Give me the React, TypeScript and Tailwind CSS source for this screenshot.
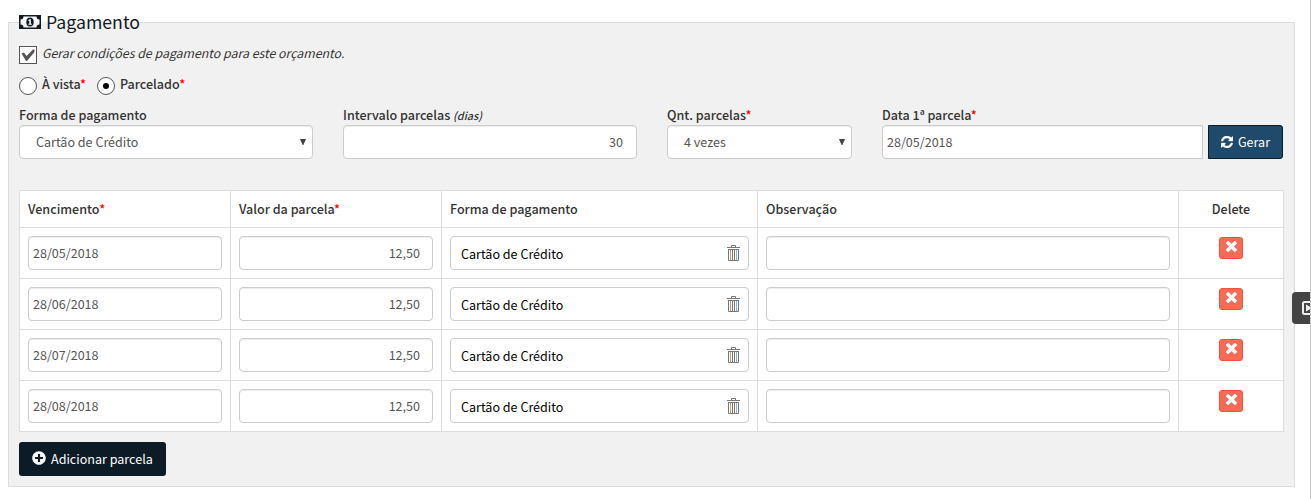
import React from "react";
import { FaPlusCircle } from "react-icons/fa";

const rows = ["28/05/2018", "28/06/2018", "28/07/2018", "28/08/2018"];

const inputBox =
  "flex h-[34px] items-center rounded border border-[#ccc] bg-white text-[#555] shadow-[inset_0_1px_1px_rgba(0,0,0,0.075)]";

function Req() {
  return <span className="text-[#f00]">*</span>;
}

function Caret() {
  return (
    <svg className="-mt-px h-[6px] w-[6px]" viewBox="0 0 6 6" fill="#444">
      <path d="M0 0h6L3.400 6h-.8z" />
    </svg>
  );
}

function Check() {
  return (
    <svg className="h-[12px] w-[14px]" viewBox="0 0 14 12" fill="#555">
      <path d="M.5 4.500L3 3.500 5.500 7 12 .5l1.500 0v2.500L6 12H5z" />
    </svg>
  );
}

function Money() {
  return (
    <svg className="-mt-[2px] h-[14px] w-[22px]" viewBox="0 0 22 14">
      <path fill="#0f1a24" fillRule="evenodd" d="M0 0h22v14H0zM4.500 1.500A3 3 0 0 1 1.500 4.500v5A3 3 0 0 1 4.500 12.500h13A3 3 0 0 1 20.500 9.500v-5A3 3 0 0 1 17.500 1.500z" />
      <ellipse cx="11" cy="7" rx="3.700" ry="4.500" fill="#0f1a24" />
      <path fill="#fff" d="M10.500 4.200h1.300v4.600h1v1H9.300v-1h1V5.700l-.8.400-.3-.9z" />
    </svg>
  );
}

function Times() {
  return (
    <svg className="-mt-[2px] h-[11px] w-[11px]" viewBox="0 0 1188 1188" fill="#fff">
      <path d="M1188 956q0 40-28 68l-136 136q-28 28-68 28t-68-28L594 866l-294 294q-28 28-68 28t-68-28L28 1024Q0 996 0 956t28-68l294-294L28 300Q0 272 0 232t28-68L164 28Q192 0 232 0t68 28l294 294L888 28q28-28 68-28t68 28l136 136q28 28 28 68t-28 68L866 594l294 294q28 28 28 68z" />
    </svg>
  );
}

function Refresh() {
  return (
    <svg className="h-[12px] w-[12px]" viewBox="0 0 1536 1536" fill="#fff" stroke="#fff" strokeWidth="50">
      <path d="M1511 928q0 5-1 7-64 268-268 434.500T764 1536q-146 0-282.500-55T238 1324l-129 129q-19 19-45 19t-45-19-19-45V960q0-26 19-45t45-19h448q26 0 45 19t19 45-19 45l-137 137q71 66 161 102t187 36q134 0 250-65t186-179q11-17 53-117 8-23 30-23h192q13 0 22.500 9.500t9.500 22.500zm25-800v448q0 26-19 45t-45 19h-448q-26 0-45-19t-19-45 19-45l138-138Q969 256 768 256q-134 0-250 65T332 500q-11 17-53 117-8 23-30 23H50q-13 0-22.500-9.500T18 608v-7q65-268 270-434.500T768 0q146 0 284 55.500T1297 212l130-129q19-19 45-19t45 19 19 45z" />
    </svg>
  );
}

function Trash() {
  return (
    <svg className="-mt-px h-[16px] w-[13px] shrink-0" viewBox="0 0 13 16" fill="none" stroke="#777">
      <path d="M4.500 2.500v-2h4v2M0 2.500h13M1.500 4v11.500h10V4M1 4.500h11" />
      <path stroke="#c99f78" d="M3.500 5v10" />
      <path d="M5.500 5v10M7.500 5v10" />
      <path stroke="#8fb4dc" d="M9.500 5v10" />
    </svg>
  );
}

function Label({ children }: { children: React.ReactNode }) {
  return <div className="h-5 whitespace-nowrap font-medium leading-5">{children}</div>;
}

export default function App() {
  return (
    <div className="relative h-[499px] w-[1311px] overflow-hidden border-r border-[#ccc] bg-white pl-2 pt-[11px] font-['Noto_Sans_CJK_SC','Noto_Sans',sans-serif] text-[12.550px] text-[#333]">
      <fieldset className="h-[476px] w-[1287px] border border-[#ddd] bg-[#f1f1f1] px-[10px]">
        <legend className="flex h-[23px] items-center gap-[5px] text-[17.700px] leading-[23px] text-[#0f1a24]">
          <Money />
          <span className="-mt-[2px] whitespace-nowrap">Pagamento</span>
        </legend>
        <div className="mt-[12px] flex h-[18px] items-center gap-[5px]">
          <span className="flex size-[18px] items-center justify-center border border-[#555] bg-white">
            <Check />
          </span>
          <span className="-mt-1 whitespace-nowrap text-[12.350px] italic">Gerar condições de pagamento para este orçamento.</span>
        </div>
        <div className="mt-[13px] flex h-[18px] items-center font-medium">
          <span className="size-[18px] rounded-full border border-[#555] bg-white" />
          <span className="-mt-[3px] ml-[5px] w-[55px] whitespace-nowrap">À vista<Req /></span>
          <span className="flex size-[18px] items-center justify-center rounded-full border border-[#555] bg-white">
            <span className="size-[6px] rounded-full bg-black" />
          </span>
          <span className="-mt-[3px] ml-[5px] whitespace-nowrap">Parcelado<Req /></span>
        </div>
        <div className="mt-[10px] flex">
          <div className="w-[294px]">
            <Label>Forma de pagamento</Label>
            <div className={`${inputBox} justify-between pl-4 pr-[6px]`}><span>Cartão de Crédito</span><Caret /></div>
          </div>
          <div className="ml-[30px] w-[294px]">
            <Label>Intervalo parcelas <span className="text-[10.800px] italic">(dias)</span></Label>
            <div className={`${inputBox} justify-end pr-[13px]`}>30</div>
          </div>
          <div className="ml-[30px] w-[185px]">
            <Label>Qnt. parcelas<Req /></Label>
            <div className={`${inputBox} justify-between pl-4 pr-[6px]`}><span>4 vezes</span><Caret /></div>
          </div>
          <div className="ml-[30px] w-[321px]">
            <Label>Data 1ª parcela<Req /></Label>
            <div className="flex h-[34px] items-center rounded-l border border-[#ccc] bg-white pl-1 text-[#555] shadow-[inset_0_1px_1px_rgba(0,0,0,0.075)]">28/05/2018</div>
          </div>
          <button className="ml-[5px] mt-5 flex h-[34px] w-[75px] items-center justify-center gap-[5px] rounded-r-[3px] border border-[#0d1b26] bg-[#1f4a6b] text-white">
            <Refresh /><span>Gerar</span>
          </button>
        </div>
        <table className="mt-[31px] w-[1265px] table-fixed border-separate border-spacing-0 border-l border-t border-[#ddd] bg-white">
          <colgroup>
            <col className="w-[211px]" /><col className="w-[211px]" /><col className="w-[316px]" /><col className="w-[421px]" /><col className="w-[105px]" />
          </colgroup>
          <thead>
            <tr className="h-[37px] text-left [&>th]:border-b [&>th]:border-r [&>th]:border-[#ddd] [&>th]:px-2 [&>th]:py-0 [&>th]:font-medium">
              <th>Vencimento<Req /></th>
              <th>Valor da parcela<Req /></th>
              <th>Forma de pagamento</th>
              <th>Observação</th>
              <th className="text-center">Delete</th>
            </tr>
          </thead>
          <tbody>
            {rows.map((d) => (
              <tr key={d} className="h-[51px] [&>td]:border-b [&>td]:border-r [&>td]:border-[#ddd] [&>td]:px-2 [&>td]:py-0">
                <td><div className={`${inputBox} pl-1`}>{d}</div></td>
                <td><div className={`${inputBox} justify-end pr-3`}>12,50</div></td>
                <td>
                  <div className="flex h-[34px] items-center justify-between rounded border border-[#ccc] bg-white pl-[10px] pr-2 text-black">
                    <span className="mt-[3px]">Cartão de Crédito</span><Trash />
                  </div>
                </td>
                <td><div className={inputBox} /></td>
                <td>
                  <button className="mx-auto -mt-[11px] flex h-[22px] w-[24px] items-center justify-center rounded-[3px] border border-[#f4523b] bg-[#f76a56]">
                    <Times />
                  </button>
                </td>
              </tr>
            ))}
          </tbody>
        </table>
        <button className="mt-[10px] flex h-[34px] w-[147px] items-center gap-[5px] rounded-[3px] bg-[#0d1b26] pl-[13px] text-white">
          <FaPlusCircle size={14} className="-mt-[2px]" /><span className="whitespace-nowrap">Adicionar parcela</span>
        </button>
      </fieldset>
      <div className="absolute left-[1292px] top-[292px] flex h-8 w-[19px] items-center rounded-l bg-[#444] pl-[10px]">
        <svg className="h-[14px] w-[16px] shrink-0" viewBox="0 0 16 14" fill="none">
          <rect x="1" y="1" width="15" height="12" rx="1.500" stroke="#eee" strokeWidth="2" />
          <path d="M4 3.500l6 3.500-6 3.500z" fill="#eee" />
        </svg>
      </div>
    </div>
  );
}
